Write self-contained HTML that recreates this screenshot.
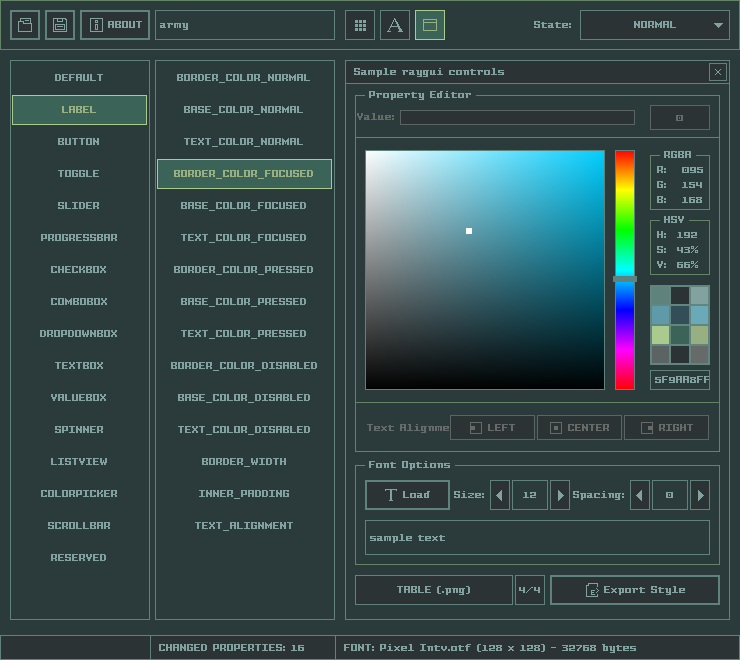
<!DOCTYPE html>
<html><head><meta charset="utf-8"><style>html,body{margin:0;padding:0;background:#2b3a3a;}svg{display:block;}</style></head>
<body><svg width="740" height="660" viewBox="0 0 740 660" shape-rendering="crispEdges"><defs><linearGradient id="gh" x1="0" y1="0" x2="1" y2="0"><stop offset="0" stop-color="#ffffff"/><stop offset="1" stop-color="#00ceff"/></linearGradient><linearGradient id="gv" x1="0" y1="0" x2="0" y2="1"><stop offset="0" stop-color="#000000" stop-opacity="0"/><stop offset="1" stop-color="#000000" stop-opacity="1"/></linearGradient><linearGradient id="hue" x1="0" y1="0" x2="0" y2="1"><stop offset="0.0000" stop-color="#ff0000"/><stop offset="0.1667" stop-color="#ffff00"/><stop offset="0.3333" stop-color="#00ff00"/><stop offset="0.5000" stop-color="#00ffff"/><stop offset="0.6667" stop-color="#0000ff"/><stop offset="0.8333" stop-color="#ff00ff"/><stop offset="1.0000" stop-color="#ff0000"/></linearGradient><path id="g37" d="M0 0h3v1h-3zM6 0h1v1h-1zM0 1h1v1h-1zM2 1h1v1h-1zM5 1h1v1h-1zM0 2h3v1h-3zM4 2h1v1h-1zM3 3h1v1h-1zM2 4h1v1h-1zM4 4h3v1h-3zM1 5h1v1h-1zM4 5h1v1h-1zM6 5h1v1h-1zM0 6h1v1h-1zM4 6h3v1h-3z"/><path id="g40" d="M1 0h3v1h-3zM0 1h2v1h-2zM0 2h2v1h-2zM0 3h2v1h-2zM0 4h2v1h-2zM0 5h2v1h-2zM0 6h2v1h-2zM1 7h3v1h-3z"/><path id="g41" d="M0 0h3v1h-3zM2 1h2v1h-2zM2 2h2v1h-2zM2 3h2v1h-2zM2 4h2v1h-2zM2 5h2v1h-2zM2 6h2v1h-2zM0 7h3v1h-3z"/><path id="g45" d="M0 3h5v1h-5z"/><path id="g46" d="M0 5h2v1h-2zM0 6h2v1h-2z"/><path id="g47" d="M5 1h2v1h-2zM4 2h1v1h-1zM3 3h1v1h-1zM2 4h1v1h-1zM1 5h1v1h-1zM0 6h1v1h-1z"/><path id="g48" d="M0 1h7v1h-7zM0 2h2v1h-2zM5 2h2v1h-2zM0 3h2v1h-2zM3 3h1v1h-1zM5 3h2v1h-2zM0 4h2v1h-2zM3 4h1v1h-1zM5 4h2v1h-2zM0 5h2v1h-2zM5 5h2v1h-2zM0 6h7v1h-7z"/><path id="g49" d="M1 1h3v1h-3zM2 2h2v1h-2zM2 3h2v1h-2zM2 4h2v1h-2zM2 5h2v1h-2zM0 6h6v1h-6z"/><path id="g50" d="M0 1h6v1h-6zM0 2h2v1h-2zM4 2h2v1h-2zM4 3h2v1h-2zM0 4h6v1h-6zM0 5h2v1h-2zM0 6h6v1h-6z"/><path id="g51" d="M0 1h6v1h-6zM4 2h2v1h-2zM1 3h4v1h-4zM4 4h2v1h-2zM4 5h2v1h-2zM0 6h6v1h-6z"/><path id="g52" d="M0 1h2v1h-2zM4 1h2v1h-2zM0 2h2v1h-2zM4 2h2v1h-2zM0 3h2v1h-2zM4 3h2v1h-2zM0 4h6v1h-6zM4 5h2v1h-2zM4 6h2v1h-2z"/><path id="g53" d="M0 1h6v1h-6zM0 2h2v1h-2zM0 3h6v1h-6zM4 4h2v1h-2zM0 5h2v1h-2zM4 5h2v1h-2zM0 6h6v1h-6z"/><path id="g54" d="M0 1h6v1h-6zM0 2h2v1h-2zM0 3h6v1h-6zM0 4h2v1h-2zM4 4h2v1h-2zM0 5h2v1h-2zM4 5h2v1h-2zM0 6h6v1h-6z"/><path id="g55" d="M0 1h6v1h-6zM4 2h2v1h-2zM3 3h2v1h-2zM2 4h2v1h-2zM1 5h2v1h-2zM1 6h2v1h-2z"/><path id="g56" d="M0 1h6v1h-6zM0 2h2v1h-2zM4 2h2v1h-2zM1 3h4v1h-4zM0 4h2v1h-2zM4 4h2v1h-2zM0 5h2v1h-2zM4 5h2v1h-2zM0 6h6v1h-6z"/><path id="g57" d="M0 1h6v1h-6zM0 2h2v1h-2zM4 2h2v1h-2zM0 3h2v1h-2zM4 3h2v1h-2zM0 4h6v1h-6zM4 5h2v1h-2zM0 6h6v1h-6z"/><path id="g58" d="M0 2h2v1h-2zM0 3h2v1h-2zM0 5h2v1h-2zM0 6h2v1h-2z"/><path id="g65" d="M0 0h6v1h-6zM0 1h2v1h-2zM4 1h2v1h-2zM0 2h2v1h-2zM4 2h2v1h-2zM0 3h6v1h-6zM0 4h2v1h-2zM4 4h2v1h-2zM0 5h2v1h-2zM4 5h2v1h-2zM0 6h2v1h-2zM4 6h2v1h-2z"/><path id="g66" d="M0 0h6v1h-6zM0 1h2v1h-2zM4 1h2v1h-2zM0 2h2v1h-2zM4 2h2v1h-2zM0 3h5v1h-5zM0 4h2v1h-2zM4 4h2v1h-2zM0 5h2v1h-2zM4 5h2v1h-2zM0 6h6v1h-6z"/><path id="g67" d="M0 0h6v1h-6zM0 1h2v1h-2zM4 1h2v1h-2zM0 2h2v1h-2zM0 3h2v1h-2zM0 4h2v1h-2zM0 5h2v1h-2zM4 5h2v1h-2zM0 6h6v1h-6z"/><path id="g68" d="M0 0h5v1h-5zM0 1h2v1h-2zM4 1h2v1h-2zM0 2h2v1h-2zM4 2h2v1h-2zM0 3h2v1h-2zM4 3h2v1h-2zM0 4h2v1h-2zM4 4h2v1h-2zM0 5h2v1h-2zM4 5h2v1h-2zM0 6h5v1h-5z"/><path id="g69" d="M0 0h6v1h-6zM0 1h2v1h-2zM0 2h2v1h-2zM0 3h5v1h-5zM0 4h2v1h-2zM0 5h2v1h-2zM0 6h6v1h-6z"/><path id="g70" d="M0 0h6v1h-6zM0 1h2v1h-2zM0 2h2v1h-2zM0 3h5v1h-5zM0 4h2v1h-2zM0 5h2v1h-2zM0 6h2v1h-2z"/><path id="g71" d="M0 0h6v1h-6zM0 1h2v1h-2zM4 1h2v1h-2zM0 2h2v1h-2zM0 3h2v1h-2zM3 3h3v1h-3zM0 4h2v1h-2zM4 4h2v1h-2zM0 5h2v1h-2zM4 5h2v1h-2zM0 6h6v1h-6z"/><path id="g72" d="M0 0h2v1h-2zM4 0h2v1h-2zM0 1h2v1h-2zM4 1h2v1h-2zM0 2h2v1h-2zM4 2h2v1h-2zM0 3h6v1h-6zM0 4h2v1h-2zM4 4h2v1h-2zM0 5h2v1h-2zM4 5h2v1h-2zM0 6h2v1h-2zM4 6h2v1h-2z"/><path id="g73" d="M0 0h6v1h-6zM2 1h2v1h-2zM2 2h2v1h-2zM2 3h2v1h-2zM2 4h2v1h-2zM2 5h2v1h-2zM0 6h6v1h-6z"/><path id="g75" d="M0 0h2v1h-2zM4 0h2v1h-2zM0 1h2v1h-2zM4 1h2v1h-2zM0 2h2v1h-2zM3 2h2v1h-2zM0 3h4v1h-4zM0 4h2v1h-2zM4 4h2v1h-2zM0 5h2v1h-2zM4 5h2v1h-2zM0 6h2v1h-2zM4 6h2v1h-2z"/><path id="g76" d="M0 0h2v1h-2zM0 1h2v1h-2zM0 2h2v1h-2zM0 3h2v1h-2zM0 4h2v1h-2zM0 5h2v1h-2zM0 6h6v1h-6z"/><path id="g77" d="M0 0h1v1h-1zM6 0h1v1h-1zM0 1h2v1h-2zM5 1h2v1h-2zM0 2h3v1h-3zM4 2h3v1h-3zM0 3h7v1h-7zM0 4h2v1h-2zM3 4h1v1h-1zM5 4h2v1h-2zM0 5h2v1h-2zM3 5h1v1h-1zM5 5h2v1h-2zM0 6h2v1h-2zM5 6h2v1h-2z"/><path id="g78" d="M0 0h2v1h-2zM4 0h2v1h-2zM0 1h2v1h-2zM4 1h2v1h-2zM0 2h3v1h-3zM4 2h2v1h-2zM0 3h6v1h-6zM0 4h2v1h-2zM3 4h3v1h-3zM0 5h2v1h-2zM4 5h2v1h-2zM0 6h2v1h-2zM4 6h2v1h-2z"/><path id="g79" d="M0 0h6v1h-6zM0 1h2v1h-2zM4 1h2v1h-2zM0 2h2v1h-2zM4 2h2v1h-2zM0 3h2v1h-2zM4 3h2v1h-2zM0 4h2v1h-2zM4 4h2v1h-2zM0 5h2v1h-2zM4 5h2v1h-2zM0 6h6v1h-6z"/><path id="g80" d="M0 0h6v1h-6zM0 1h2v1h-2zM4 1h2v1h-2zM0 2h2v1h-2zM4 2h2v1h-2zM0 3h2v1h-2zM4 3h2v1h-2zM0 4h6v1h-6zM0 5h2v1h-2zM0 6h2v1h-2z"/><path id="g82" d="M0 0h6v1h-6zM0 1h2v1h-2zM4 1h2v1h-2zM0 2h2v1h-2zM4 2h2v1h-2zM0 3h2v1h-2zM4 3h2v1h-2zM0 4h5v1h-5zM0 5h2v1h-2zM4 5h2v1h-2zM0 6h2v1h-2zM4 6h2v1h-2z"/><path id="g83" d="M0 0h6v1h-6zM0 1h2v1h-2zM4 1h2v1h-2zM0 2h2v1h-2zM0 3h6v1h-6zM4 4h2v1h-2zM0 5h2v1h-2zM4 5h2v1h-2zM0 6h6v1h-6z"/><path id="g84" d="M0 0h6v1h-6zM2 1h2v1h-2zM2 2h2v1h-2zM2 3h2v1h-2zM2 4h2v1h-2zM2 5h2v1h-2zM2 6h2v1h-2z"/><path id="g85" d="M0 0h2v1h-2zM4 0h2v1h-2zM0 1h2v1h-2zM4 1h2v1h-2zM0 2h2v1h-2zM4 2h2v1h-2zM0 3h2v1h-2zM4 3h2v1h-2zM0 4h2v1h-2zM4 4h2v1h-2zM0 5h2v1h-2zM4 5h2v1h-2zM0 6h6v1h-6z"/><path id="g86" d="M0 0h2v1h-2zM4 0h2v1h-2zM0 1h2v1h-2zM4 1h2v1h-2zM0 2h2v1h-2zM4 2h2v1h-2zM1 3h4v1h-4zM1 4h4v1h-4zM2 5h2v1h-2zM2 6h2v1h-2z"/><path id="g87" d="M0 0h2v1h-2zM5 0h2v1h-2zM0 1h2v1h-2zM5 1h2v1h-2zM0 2h2v1h-2zM3 2h1v1h-1zM5 2h2v1h-2zM0 3h2v1h-2zM3 3h1v1h-1zM5 3h2v1h-2zM0 4h7v1h-7zM1 5h2v1h-2zM4 5h2v1h-2zM1 6h2v1h-2zM4 6h2v1h-2z"/><path id="g88" d="M0 0h2v1h-2zM4 0h2v1h-2zM0 1h2v1h-2zM4 1h2v1h-2zM1 2h4v1h-4zM2 3h2v1h-2zM1 4h4v1h-4zM0 5h2v1h-2zM4 5h2v1h-2zM0 6h2v1h-2zM4 6h2v1h-2z"/><path id="g95" d="M0 8h6v1h-6z"/><path id="g97" d="M0 2h5v1h-5zM3 3h2v1h-2zM0 4h5v1h-5zM0 5h2v1h-2zM3 5h2v1h-2zM0 6h6v1h-6z"/><path id="g98" d="M0 0h3v1h-3zM1 1h2v1h-2zM1 2h5v1h-5zM1 3h2v1h-2zM4 3h2v1h-2zM1 4h2v1h-2zM4 4h2v1h-2zM1 5h2v1h-2zM4 5h2v1h-2zM1 6h5v1h-5z"/><path id="g99" d="M0 2h6v1h-6zM0 3h2v1h-2zM4 3h2v1h-2zM0 4h2v1h-2zM0 5h2v1h-2zM0 6h6v1h-6z"/><path id="g100" d="M3 0h3v1h-3zM3 1h2v1h-2zM0 2h5v1h-5zM0 3h2v1h-2zM3 3h2v1h-2zM0 4h2v1h-2zM3 4h2v1h-2zM0 5h2v1h-2zM3 5h2v1h-2zM0 6h5v1h-5z"/><path id="g101" d="M0 2h6v1h-6zM0 3h2v1h-2zM4 3h2v1h-2zM0 4h6v1h-6zM0 5h2v1h-2zM0 6h6v1h-6z"/><path id="g102" d="M2 0h4v1h-4zM1 1h2v1h-2zM0 2h5v1h-5zM1 3h2v1h-2zM1 4h2v1h-2zM1 5h2v1h-2zM1 6h2v1h-2z"/><path id="g103" d="M0 2h6v1h-6zM0 3h2v1h-2zM3 3h2v1h-2zM0 4h2v1h-2zM3 4h2v1h-2zM0 5h2v1h-2zM3 5h2v1h-2zM0 6h5v1h-5zM3 7h2v1h-2zM0 8h5v1h-5z"/><path id="g105" d="M2 0h2v1h-2zM1 2h3v1h-3zM2 3h2v1h-2zM2 4h2v1h-2zM2 5h2v1h-2zM0 6h6v1h-6z"/><path id="g108" d="M1 0h3v1h-3zM2 1h2v1h-2zM2 2h2v1h-2zM2 3h2v1h-2zM2 4h2v1h-2zM2 5h2v1h-2zM0 6h6v1h-6z"/><path id="g109" d="M0 2h7v1h-7zM0 3h2v1h-2zM3 3h1v1h-1zM5 3h2v1h-2zM0 4h2v1h-2zM3 4h1v1h-1zM5 4h2v1h-2zM0 5h2v1h-2zM3 5h1v1h-1zM5 5h2v1h-2zM0 6h2v1h-2zM3 6h1v1h-1zM5 6h2v1h-2z"/><path id="g110" d="M0 2h6v1h-6zM1 3h2v1h-2zM4 3h2v1h-2zM1 4h2v1h-2zM4 4h2v1h-2zM1 5h2v1h-2zM4 5h2v1h-2zM1 6h2v1h-2zM4 6h2v1h-2z"/><path id="g111" d="M0 2h6v1h-6zM0 3h2v1h-2zM4 3h2v1h-2zM0 4h2v1h-2zM4 4h2v1h-2zM0 5h2v1h-2zM4 5h2v1h-2zM0 6h6v1h-6z"/><path id="g112" d="M0 2h6v1h-6zM1 3h2v1h-2zM4 3h2v1h-2zM1 4h2v1h-2zM4 4h2v1h-2zM1 5h2v1h-2zM4 5h2v1h-2zM1 6h5v1h-5zM1 7h2v1h-2zM1 8h2v1h-2z"/><path id="g114" d="M0 2h6v1h-6zM1 3h2v1h-2zM4 3h2v1h-2zM1 4h2v1h-2zM1 5h2v1h-2zM1 6h2v1h-2z"/><path id="g115" d="M0 2h6v1h-6zM0 3h2v1h-2zM0 4h6v1h-6zM4 5h2v1h-2zM0 6h6v1h-6z"/><path id="g116" d="M1 1h2v1h-2zM0 2h6v1h-6zM1 3h2v1h-2zM1 4h2v1h-2zM1 5h2v1h-2zM1 6h5v1h-5z"/><path id="g117" d="M0 2h2v1h-2zM3 2h2v1h-2zM0 3h2v1h-2zM3 3h2v1h-2zM0 4h2v1h-2zM3 4h2v1h-2zM0 5h2v1h-2zM3 5h2v1h-2zM0 6h6v1h-6z"/><path id="g118" d="M0 2h2v1h-2zM4 2h2v1h-2zM0 3h2v1h-2zM4 3h2v1h-2zM0 4h2v1h-2zM4 4h2v1h-2zM1 5h4v1h-4zM2 6h2v1h-2z"/><path id="g120" d="M0 2h2v1h-2zM4 2h2v1h-2zM1 3h4v1h-4zM2 4h2v1h-2zM1 5h4v1h-4zM0 6h2v1h-2zM4 6h2v1h-2z"/><path id="g121" d="M0 2h3v1h-3zM4 2h2v1h-2zM1 3h2v1h-2zM4 3h2v1h-2zM1 4h2v1h-2zM4 4h2v1h-2zM1 5h2v1h-2zM4 5h2v1h-2zM1 6h5v1h-5zM4 7h2v1h-2zM1 8h5v1h-5z"/><path id="g122" d="M0 2h6v1h-6zM4 3h2v1h-2zM2 4h2v1h-2zM0 5h2v1h-2zM0 6h6v1h-6z"/></defs><rect x="0" y="0" width="740" height="660" fill="#2b3a3a"/><rect x="0" y="0" width="740" height="1" fill="#638465"/><rect x="0" y="49" width="740" height="1" fill="#638465"/><rect x="0" y="0" width="1" height="50" fill="#638465"/><rect x="739" y="0" width="1" height="50" fill="#638465"/><rect x="10" y="10" width="30" height="30" fill="#60827d"/><rect x="12" y="12" width="26" height="26" fill="#2c3334"/><rect x="45" y="10" width="30" height="30" fill="#60827d"/><rect x="47" y="12" width="26" height="26" fill="#2c3334"/><rect x="80" y="10" width="70" height="30" fill="#60827d"/><rect x="82" y="12" width="66" height="26" fill="#2c3334"/><path fill="#82a29f" d="M20 18h11v1h-11zM20 19h1v1h-1zM30 19h1v1h-1zM20 20h1v1h-1zM25 20h4v1h-4zM30 20h1v1h-1zM18 21h6v1h-6zM30 21h1v1h-1zM18 22h1v1h-1zM23 22h1v1h-1zM30 22h1v1h-1zM18 23h1v1h-1zM23 23h9v1h-9zM18 24h1v1h-1zM31 24h1v1h-1zM18 25h1v1h-1zM31 25h1v1h-1zM18 26h1v1h-1zM31 26h1v1h-1zM18 27h1v1h-1zM31 27h1v1h-1zM18 28h1v1h-1zM31 28h1v1h-1zM18 29h1v1h-1zM31 29h1v1h-1zM18 30h1v1h-1zM31 30h1v1h-1zM18 31h14v1h-14z"/><path fill="#82a29f" d="M53 18h13v1h-13zM53 19h1v1h-1zM57 19h1v1h-1zM62 19h1v1h-1zM65 19h2v1h-2zM53 20h1v1h-1zM57 20h1v1h-1zM62 20h1v1h-1zM66 20h1v1h-1zM53 21h1v1h-1zM57 21h6v1h-6zM66 21h1v1h-1zM53 22h1v1h-1zM66 22h1v1h-1zM53 23h1v1h-1zM66 23h1v1h-1zM53 24h1v1h-1zM55 24h10v1h-10zM66 24h1v1h-1zM53 25h1v1h-1zM55 25h1v1h-1zM64 25h1v1h-1zM66 25h1v1h-1zM53 26h1v1h-1zM55 26h1v1h-1zM57 26h6v1h-6zM64 26h1v1h-1zM66 26h1v1h-1zM53 27h1v1h-1zM55 27h1v1h-1zM64 27h1v1h-1zM66 27h1v1h-1zM53 28h1v1h-1zM55 28h1v1h-1zM64 28h1v1h-1zM66 28h1v1h-1zM53 29h1v1h-1zM55 29h10v1h-10zM66 29h1v1h-1zM53 30h1v1h-1zM66 30h1v1h-1zM53 31h14v1h-14z"/><path fill="#82a29f" d="M90 18h13v1h-13zM90 19h1v1h-1zM102 19h1v1h-1zM90 20h1v1h-1zM95 20h3v1h-3zM102 20h1v1h-1zM90 21h1v1h-1zM95 21h1v1h-1zM97 21h1v1h-1zM102 21h1v1h-1zM90 22h1v1h-1zM95 22h3v1h-3zM102 22h1v1h-1zM90 23h1v1h-1zM102 23h1v1h-1zM90 24h1v1h-1zM95 24h3v1h-3zM102 24h1v1h-1zM90 25h1v1h-1zM95 25h1v1h-1zM97 25h1v1h-1zM102 25h1v1h-1zM90 26h1v1h-1zM95 26h1v1h-1zM97 26h1v1h-1zM102 26h1v1h-1zM90 27h1v1h-1zM95 27h1v1h-1zM97 27h1v1h-1zM102 27h1v1h-1zM90 28h1v1h-1zM95 28h1v1h-1zM97 28h1v1h-1zM102 28h1v1h-1zM90 29h1v1h-1zM95 29h3v1h-3zM102 29h1v1h-1zM90 30h1v1h-1zM102 30h1v1h-1zM90 31h13v1h-13z"/><g fill="#82a29f"><use href="#g65" x="108" y="21"/><use href="#g66" x="115" y="21"/><use href="#g79" x="122" y="21"/><use href="#g85" x="129" y="21"/><use href="#g84" x="136" y="21"/></g><rect x="155" y="10" width="180" height="30" fill="#60827d"/><rect x="156" y="11" width="178" height="28" fill="#2b3a3a"/><g fill="#82a29f"><use href="#g97" x="160" y="21"/><use href="#g114" x="167" y="21"/><use href="#g109" x="174" y="21"/><use href="#g121" x="182" y="21"/></g><rect x="345" y="10" width="30" height="30" fill="#60827d"/><rect x="346" y="11" width="28" height="28" fill="#2c3334"/><rect x="355" y="20" width="3" height="3" fill="#82a29f"/><rect x="355" y="24" width="3" height="3" fill="#82a29f"/><rect x="355" y="28" width="3" height="3" fill="#82a29f"/><rect x="359" y="20" width="3" height="3" fill="#82a29f"/><rect x="359" y="24" width="3" height="3" fill="#82a29f"/><rect x="359" y="28" width="3" height="3" fill="#82a29f"/><rect x="363" y="20" width="3" height="3" fill="#82a29f"/><rect x="363" y="24" width="3" height="3" fill="#82a29f"/><rect x="363" y="28" width="3" height="3" fill="#82a29f"/><rect x="380" y="10" width="30" height="30" fill="#60827d"/><rect x="381" y="11" width="28" height="28" fill="#2c3334"/><path fill="#82a29f" d="M394 18h1v1h-1zM394 19h1v1h-1zM395 19h1v1h-1zM393 20h1v1h-1zM395 20h1v1h-1zM393 21h1v1h-1zM395 21h1v1h-1zM396 21h1v1h-1zM392 22h1v1h-1zM396 22h1v1h-1zM397 22h1v1h-1zM392 23h1v1h-1zM396 23h1v1h-1zM397 23h1v1h-1zM391 24h1v1h-1zM397 24h1v1h-1zM398 24h1v1h-1zM391 25h1v1h-1zM397 25h1v1h-1zM398 25h1v1h-1zM390 26h1v1h-1zM391 26h1v1h-1zM392 26h1v1h-1zM393 26h1v1h-1zM394 26h1v1h-1zM395 26h1v1h-1zM396 26h1v1h-1zM397 26h1v1h-1zM398 26h1v1h-1zM399 26h1v1h-1zM390 27h1v1h-1zM398 27h1v1h-1zM399 27h1v1h-1zM389 28h1v1h-1zM398 28h1v1h-1zM399 28h1v1h-1zM400 28h1v1h-1zM389 29h1v1h-1zM399 29h1v1h-1zM400 29h1v1h-1zM401 29h1v1h-1zM388 30h1v1h-1zM399 30h1v1h-1zM400 30h1v1h-1zM401 30h1v1h-1zM387 31h1v1h-1zM388 31h1v1h-1zM389 31h1v1h-1zM390 31h1v1h-1zM398 31h1v1h-1zM399 31h1v1h-1zM400 31h1v1h-1zM401 31h1v1h-1zM402 31h1v1h-1z"/><rect x="415" y="10" width="30" height="30" fill="#a9cb8d"/><rect x="416" y="11" width="28" height="28" fill="#3b6357"/><rect x="423" y="19" width="14" height="1" fill="#97af81"/><rect x="423" y="30" width="14" height="1" fill="#97af81"/><rect x="423" y="19" width="1" height="12" fill="#97af81"/><rect x="436" y="19" width="1" height="12" fill="#97af81"/><rect x="423" y="22" width="14" height="1" fill="#97af81"/><g fill="#82a29f"><use href="#g83" x="534" y="21"/><use href="#g116" x="541" y="21"/><use href="#g97" x="548" y="21"/><use href="#g116" x="555" y="21"/><use href="#g101" x="562" y="21"/><use href="#g58" x="569" y="21"/></g><rect x="580" y="10" width="150" height="30" fill="#60827d"/><rect x="581" y="11" width="148" height="28" fill="#2c3334"/><g fill="#82a29f"><use href="#g78" x="634" y="21"/><use href="#g79" x="641" y="21"/><use href="#g82" x="648" y="21"/><use href="#g77" x="655" y="21"/><use href="#g65" x="663" y="21"/><use href="#g76" x="670" y="21"/></g><rect x="714" y="23" width="9" height="1" fill="#82a29f"/><rect x="715" y="24" width="7" height="1" fill="#82a29f"/><rect x="716" y="25" width="5" height="1" fill="#82a29f"/><rect x="717" y="26" width="3" height="1" fill="#82a29f"/><rect x="718" y="27" width="1" height="1" fill="#82a29f"/><rect x="10" y="60" width="140" height="560" fill="#60827d"/><rect x="11" y="61" width="138" height="558" fill="#2b3a3a"/><g fill="#82a29f"><use href="#g68" x="55" y="74"/><use href="#g69" x="62" y="74"/><use href="#g70" x="69" y="74"/><use href="#g65" x="76" y="74"/><use href="#g85" x="83" y="74"/><use href="#g76" x="90" y="74"/><use href="#g84" x="97" y="74"/></g><rect x="12" y="95" width="135" height="30" fill="#a9cb8d"/><rect x="13" y="96" width="133" height="28" fill="#3b6357"/><g fill="#97af81"><use href="#g76" x="62" y="106"/><use href="#g65" x="69" y="106"/><use href="#g66" x="76" y="106"/><use href="#g69" x="83" y="106"/><use href="#g76" x="90" y="106"/></g><g fill="#82a29f"><use href="#g66" x="58" y="138"/><use href="#g85" x="65" y="138"/><use href="#g84" x="72" y="138"/><use href="#g84" x="79" y="138"/><use href="#g79" x="86" y="138"/><use href="#g78" x="93" y="138"/></g><g fill="#82a29f"><use href="#g84" x="58" y="170"/><use href="#g79" x="65" y="170"/><use href="#g71" x="72" y="170"/><use href="#g71" x="79" y="170"/><use href="#g76" x="86" y="170"/><use href="#g69" x="93" y="170"/></g><g fill="#82a29f"><use href="#g83" x="58" y="202"/><use href="#g76" x="65" y="202"/><use href="#g73" x="72" y="202"/><use href="#g68" x="79" y="202"/><use href="#g69" x="86" y="202"/><use href="#g82" x="93" y="202"/></g><g fill="#82a29f"><use href="#g80" x="41" y="234"/><use href="#g82" x="48" y="234"/><use href="#g79" x="55" y="234"/><use href="#g71" x="62" y="234"/><use href="#g82" x="69" y="234"/><use href="#g69" x="76" y="234"/><use href="#g83" x="83" y="234"/><use href="#g83" x="90" y="234"/><use href="#g66" x="97" y="234"/><use href="#g65" x="104" y="234"/><use href="#g82" x="111" y="234"/></g><g fill="#82a29f"><use href="#g67" x="51" y="266"/><use href="#g72" x="58" y="266"/><use href="#g69" x="65" y="266"/><use href="#g67" x="72" y="266"/><use href="#g75" x="79" y="266"/><use href="#g66" x="86" y="266"/><use href="#g79" x="93" y="266"/><use href="#g88" x="100" y="266"/></g><g fill="#82a29f"><use href="#g67" x="51" y="298"/><use href="#g79" x="58" y="298"/><use href="#g77" x="65" y="298"/><use href="#g66" x="73" y="298"/><use href="#g79" x="80" y="298"/><use href="#g66" x="87" y="298"/><use href="#g79" x="94" y="298"/><use href="#g88" x="101" y="298"/></g><g fill="#82a29f"><use href="#g68" x="40" y="330"/><use href="#g82" x="47" y="330"/><use href="#g79" x="54" y="330"/><use href="#g80" x="61" y="330"/><use href="#g68" x="68" y="330"/><use href="#g79" x="75" y="330"/><use href="#g87" x="82" y="330"/><use href="#g78" x="90" y="330"/><use href="#g66" x="97" y="330"/><use href="#g79" x="104" y="330"/><use href="#g88" x="111" y="330"/></g><g fill="#82a29f"><use href="#g84" x="55" y="362"/><use href="#g69" x="62" y="362"/><use href="#g88" x="69" y="362"/><use href="#g84" x="76" y="362"/><use href="#g66" x="83" y="362"/><use href="#g79" x="90" y="362"/><use href="#g88" x="97" y="362"/></g><g fill="#82a29f"><use href="#g86" x="51" y="394"/><use href="#g65" x="58" y="394"/><use href="#g76" x="65" y="394"/><use href="#g85" x="72" y="394"/><use href="#g69" x="79" y="394"/><use href="#g66" x="86" y="394"/><use href="#g79" x="93" y="394"/><use href="#g88" x="100" y="394"/></g><g fill="#82a29f"><use href="#g83" x="55" y="426"/><use href="#g80" x="62" y="426"/><use href="#g73" x="69" y="426"/><use href="#g78" x="76" y="426"/><use href="#g78" x="83" y="426"/><use href="#g69" x="90" y="426"/><use href="#g82" x="97" y="426"/></g><g fill="#82a29f"><use href="#g76" x="51" y="458"/><use href="#g73" x="58" y="458"/><use href="#g83" x="65" y="458"/><use href="#g84" x="72" y="458"/><use href="#g86" x="79" y="458"/><use href="#g73" x="86" y="458"/><use href="#g69" x="93" y="458"/><use href="#g87" x="100" y="458"/></g><g fill="#82a29f"><use href="#g67" x="41" y="490"/><use href="#g79" x="48" y="490"/><use href="#g76" x="55" y="490"/><use href="#g79" x="62" y="490"/><use href="#g82" x="69" y="490"/><use href="#g80" x="76" y="490"/><use href="#g73" x="83" y="490"/><use href="#g67" x="90" y="490"/><use href="#g75" x="97" y="490"/><use href="#g69" x="104" y="490"/><use href="#g82" x="111" y="490"/></g><g fill="#82a29f"><use href="#g83" x="48" y="522"/><use href="#g67" x="55" y="522"/><use href="#g82" x="62" y="522"/><use href="#g79" x="69" y="522"/><use href="#g76" x="76" y="522"/><use href="#g76" x="83" y="522"/><use href="#g66" x="90" y="522"/><use href="#g65" x="97" y="522"/><use href="#g82" x="104" y="522"/></g><g fill="#82a29f"><use href="#g82" x="51" y="554"/><use href="#g69" x="58" y="554"/><use href="#g83" x="65" y="554"/><use href="#g69" x="72" y="554"/><use href="#g82" x="79" y="554"/><use href="#g86" x="86" y="554"/><use href="#g69" x="93" y="554"/><use href="#g68" x="100" y="554"/></g><rect x="155" y="60" width="180" height="560" fill="#60827d"/><rect x="156" y="61" width="178" height="558" fill="#2b3a3a"/><g fill="#82a29f"><use href="#g66" x="177" y="74"/><use href="#g79" x="184" y="74"/><use href="#g82" x="191" y="74"/><use href="#g68" x="198" y="74"/><use href="#g69" x="205" y="74"/><use href="#g82" x="212" y="74"/><use href="#g95" x="219" y="74"/><use href="#g67" x="226" y="74"/><use href="#g79" x="233" y="74"/><use href="#g76" x="240" y="74"/><use href="#g79" x="247" y="74"/><use href="#g82" x="254" y="74"/><use href="#g95" x="261" y="74"/><use href="#g78" x="268" y="74"/><use href="#g79" x="275" y="74"/><use href="#g82" x="282" y="74"/><use href="#g77" x="289" y="74"/><use href="#g65" x="297" y="74"/><use href="#g76" x="304" y="74"/></g><g fill="#82a29f"><use href="#g66" x="184" y="106"/><use href="#g65" x="191" y="106"/><use href="#g83" x="198" y="106"/><use href="#g69" x="205" y="106"/><use href="#g95" x="212" y="106"/><use href="#g67" x="219" y="106"/><use href="#g79" x="226" y="106"/><use href="#g76" x="233" y="106"/><use href="#g79" x="240" y="106"/><use href="#g82" x="247" y="106"/><use href="#g95" x="254" y="106"/><use href="#g78" x="261" y="106"/><use href="#g79" x="268" y="106"/><use href="#g82" x="275" y="106"/><use href="#g77" x="282" y="106"/><use href="#g65" x="290" y="106"/><use href="#g76" x="297" y="106"/></g><g fill="#82a29f"><use href="#g84" x="184" y="138"/><use href="#g69" x="191" y="138"/><use href="#g88" x="198" y="138"/><use href="#g84" x="205" y="138"/><use href="#g95" x="212" y="138"/><use href="#g67" x="219" y="138"/><use href="#g79" x="226" y="138"/><use href="#g76" x="233" y="138"/><use href="#g79" x="240" y="138"/><use href="#g82" x="247" y="138"/><use href="#g95" x="254" y="138"/><use href="#g78" x="261" y="138"/><use href="#g79" x="268" y="138"/><use href="#g82" x="275" y="138"/><use href="#g77" x="282" y="138"/><use href="#g65" x="290" y="138"/><use href="#g76" x="297" y="138"/></g><rect x="157" y="159" width="175" height="30" fill="#a9cb8d"/><rect x="158" y="160" width="173" height="28" fill="#3b6357"/><g fill="#97af81"><use href="#g66" x="174" y="170"/><use href="#g79" x="181" y="170"/><use href="#g82" x="188" y="170"/><use href="#g68" x="195" y="170"/><use href="#g69" x="202" y="170"/><use href="#g82" x="209" y="170"/><use href="#g95" x="216" y="170"/><use href="#g67" x="223" y="170"/><use href="#g79" x="230" y="170"/><use href="#g76" x="237" y="170"/><use href="#g79" x="244" y="170"/><use href="#g82" x="251" y="170"/><use href="#g95" x="258" y="170"/><use href="#g70" x="265" y="170"/><use href="#g79" x="272" y="170"/><use href="#g67" x="279" y="170"/><use href="#g85" x="286" y="170"/><use href="#g83" x="293" y="170"/><use href="#g69" x="300" y="170"/><use href="#g68" x="307" y="170"/></g><g fill="#82a29f"><use href="#g66" x="181" y="202"/><use href="#g65" x="188" y="202"/><use href="#g83" x="195" y="202"/><use href="#g69" x="202" y="202"/><use href="#g95" x="209" y="202"/><use href="#g67" x="216" y="202"/><use href="#g79" x="223" y="202"/><use href="#g76" x="230" y="202"/><use href="#g79" x="237" y="202"/><use href="#g82" x="244" y="202"/><use href="#g95" x="251" y="202"/><use href="#g70" x="258" y="202"/><use href="#g79" x="265" y="202"/><use href="#g67" x="272" y="202"/><use href="#g85" x="279" y="202"/><use href="#g83" x="286" y="202"/><use href="#g69" x="293" y="202"/><use href="#g68" x="300" y="202"/></g><g fill="#82a29f"><use href="#g84" x="181" y="234"/><use href="#g69" x="188" y="234"/><use href="#g88" x="195" y="234"/><use href="#g84" x="202" y="234"/><use href="#g95" x="209" y="234"/><use href="#g67" x="216" y="234"/><use href="#g79" x="223" y="234"/><use href="#g76" x="230" y="234"/><use href="#g79" x="237" y="234"/><use href="#g82" x="244" y="234"/><use href="#g95" x="251" y="234"/><use href="#g70" x="258" y="234"/><use href="#g79" x="265" y="234"/><use href="#g67" x="272" y="234"/><use href="#g85" x="279" y="234"/><use href="#g83" x="286" y="234"/><use href="#g69" x="293" y="234"/><use href="#g68" x="300" y="234"/></g><g fill="#82a29f"><use href="#g66" x="174" y="266"/><use href="#g79" x="181" y="266"/><use href="#g82" x="188" y="266"/><use href="#g68" x="195" y="266"/><use href="#g69" x="202" y="266"/><use href="#g82" x="209" y="266"/><use href="#g95" x="216" y="266"/><use href="#g67" x="223" y="266"/><use href="#g79" x="230" y="266"/><use href="#g76" x="237" y="266"/><use href="#g79" x="244" y="266"/><use href="#g82" x="251" y="266"/><use href="#g95" x="258" y="266"/><use href="#g80" x="265" y="266"/><use href="#g82" x="272" y="266"/><use href="#g69" x="279" y="266"/><use href="#g83" x="286" y="266"/><use href="#g83" x="293" y="266"/><use href="#g69" x="300" y="266"/><use href="#g68" x="307" y="266"/></g><g fill="#82a29f"><use href="#g66" x="181" y="298"/><use href="#g65" x="188" y="298"/><use href="#g83" x="195" y="298"/><use href="#g69" x="202" y="298"/><use href="#g95" x="209" y="298"/><use href="#g67" x="216" y="298"/><use href="#g79" x="223" y="298"/><use href="#g76" x="230" y="298"/><use href="#g79" x="237" y="298"/><use href="#g82" x="244" y="298"/><use href="#g95" x="251" y="298"/><use href="#g80" x="258" y="298"/><use href="#g82" x="265" y="298"/><use href="#g69" x="272" y="298"/><use href="#g83" x="279" y="298"/><use href="#g83" x="286" y="298"/><use href="#g69" x="293" y="298"/><use href="#g68" x="300" y="298"/></g><g fill="#82a29f"><use href="#g84" x="181" y="330"/><use href="#g69" x="188" y="330"/><use href="#g88" x="195" y="330"/><use href="#g84" x="202" y="330"/><use href="#g95" x="209" y="330"/><use href="#g67" x="216" y="330"/><use href="#g79" x="223" y="330"/><use href="#g76" x="230" y="330"/><use href="#g79" x="237" y="330"/><use href="#g82" x="244" y="330"/><use href="#g95" x="251" y="330"/><use href="#g80" x="258" y="330"/><use href="#g82" x="265" y="330"/><use href="#g69" x="272" y="330"/><use href="#g83" x="279" y="330"/><use href="#g83" x="286" y="330"/><use href="#g69" x="293" y="330"/><use href="#g68" x="300" y="330"/></g><g fill="#82a29f"><use href="#g66" x="171" y="362"/><use href="#g79" x="178" y="362"/><use href="#g82" x="185" y="362"/><use href="#g68" x="192" y="362"/><use href="#g69" x="199" y="362"/><use href="#g82" x="206" y="362"/><use href="#g95" x="213" y="362"/><use href="#g67" x="220" y="362"/><use href="#g79" x="227" y="362"/><use href="#g76" x="234" y="362"/><use href="#g79" x="241" y="362"/><use href="#g82" x="248" y="362"/><use href="#g95" x="255" y="362"/><use href="#g68" x="262" y="362"/><use href="#g73" x="269" y="362"/><use href="#g83" x="276" y="362"/><use href="#g65" x="283" y="362"/><use href="#g66" x="290" y="362"/><use href="#g76" x="297" y="362"/><use href="#g69" x="304" y="362"/><use href="#g68" x="311" y="362"/></g><g fill="#82a29f"><use href="#g66" x="178" y="394"/><use href="#g65" x="185" y="394"/><use href="#g83" x="192" y="394"/><use href="#g69" x="199" y="394"/><use href="#g95" x="206" y="394"/><use href="#g67" x="213" y="394"/><use href="#g79" x="220" y="394"/><use href="#g76" x="227" y="394"/><use href="#g79" x="234" y="394"/><use href="#g82" x="241" y="394"/><use href="#g95" x="248" y="394"/><use href="#g68" x="255" y="394"/><use href="#g73" x="262" y="394"/><use href="#g83" x="269" y="394"/><use href="#g65" x="276" y="394"/><use href="#g66" x="283" y="394"/><use href="#g76" x="290" y="394"/><use href="#g69" x="297" y="394"/><use href="#g68" x="304" y="394"/></g><g fill="#82a29f"><use href="#g84" x="178" y="426"/><use href="#g69" x="185" y="426"/><use href="#g88" x="192" y="426"/><use href="#g84" x="199" y="426"/><use href="#g95" x="206" y="426"/><use href="#g67" x="213" y="426"/><use href="#g79" x="220" y="426"/><use href="#g76" x="227" y="426"/><use href="#g79" x="234" y="426"/><use href="#g82" x="241" y="426"/><use href="#g95" x="248" y="426"/><use href="#g68" x="255" y="426"/><use href="#g73" x="262" y="426"/><use href="#g83" x="269" y="426"/><use href="#g65" x="276" y="426"/><use href="#g66" x="283" y="426"/><use href="#g76" x="290" y="426"/><use href="#g69" x="297" y="426"/><use href="#g68" x="304" y="426"/></g><g fill="#82a29f"><use href="#g66" x="202" y="458"/><use href="#g79" x="209" y="458"/><use href="#g82" x="216" y="458"/><use href="#g68" x="223" y="458"/><use href="#g69" x="230" y="458"/><use href="#g82" x="237" y="458"/><use href="#g95" x="244" y="458"/><use href="#g87" x="251" y="458"/><use href="#g73" x="259" y="458"/><use href="#g68" x="266" y="458"/><use href="#g84" x="273" y="458"/><use href="#g72" x="280" y="458"/></g><g fill="#82a29f"><use href="#g73" x="199" y="490"/><use href="#g78" x="206" y="490"/><use href="#g78" x="213" y="490"/><use href="#g69" x="220" y="490"/><use href="#g82" x="227" y="490"/><use href="#g95" x="234" y="490"/><use href="#g80" x="241" y="490"/><use href="#g65" x="248" y="490"/><use href="#g68" x="255" y="490"/><use href="#g68" x="262" y="490"/><use href="#g73" x="269" y="490"/><use href="#g78" x="276" y="490"/><use href="#g71" x="283" y="490"/></g><g fill="#82a29f"><use href="#g84" x="195" y="522"/><use href="#g69" x="202" y="522"/><use href="#g88" x="209" y="522"/><use href="#g84" x="216" y="522"/><use href="#g95" x="223" y="522"/><use href="#g65" x="230" y="522"/><use href="#g76" x="237" y="522"/><use href="#g73" x="244" y="522"/><use href="#g71" x="251" y="522"/><use href="#g78" x="258" y="522"/><use href="#g77" x="265" y="522"/><use href="#g69" x="273" y="522"/><use href="#g78" x="280" y="522"/><use href="#g84" x="287" y="522"/></g><rect x="345" y="60" width="385" height="560" fill="#60827d"/><rect x="346" y="61" width="383" height="558" fill="#2b3a3a"/><rect x="345" y="60" width="385" height="24" fill="#60827d"/><rect x="346" y="61" width="383" height="22" fill="#2c3334"/><g fill="#82a29f"><use href="#g83" x="354" y="68"/><use href="#g97" x="361" y="68"/><use href="#g109" x="368" y="68"/><use href="#g112" x="376" y="68"/><use href="#g108" x="383" y="68"/><use href="#g101" x="390" y="68"/><use href="#g114" x="402" y="68"/><use href="#g97" x="409" y="68"/><use href="#g121" x="416" y="68"/><use href="#g103" x="423" y="68"/><use href="#g117" x="430" y="68"/><use href="#g105" x="437" y="68"/><use href="#g99" x="449" y="68"/><use href="#g111" x="456" y="68"/><use href="#g110" x="463" y="68"/><use href="#g116" x="470" y="68"/><use href="#g114" x="477" y="68"/><use href="#g111" x="484" y="68"/><use href="#g108" x="491" y="68"/><use href="#g115" x="498" y="68"/></g><rect x="709" y="63" width="18" height="18" fill="#60827d"/><rect x="710" y="64" width="16" height="16" fill="#2c3334"/><path fill="#82a29f" d="M715 69h1v1h-1zM716 70h1v1h-1zM717 71h1v1h-1zM718 72h1v1h-1zM719 73h1v1h-1zM720 74h1v1h-1zM720 69h1v1h-1zM719 70h1v1h-1zM718 71h1v1h-1zM717 72h1v1h-1zM716 73h1v1h-1zM715 74h1v1h-1z"/><rect x="355" y="95" width="1" height="357" fill="#638465"/><rect x="719" y="95" width="1" height="357" fill="#638465"/><rect x="355" y="451" width="365" height="1" fill="#638465"/><rect x="355" y="95" width="10" height="1" fill="#638465"/><rect x="476" y="95" width="244" height="1" fill="#638465"/><g fill="#82a29f"><use href="#g80" x="369" y="91"/><use href="#g114" x="376" y="91"/><use href="#g111" x="383" y="91"/><use href="#g112" x="390" y="91"/><use href="#g101" x="397" y="91"/><use href="#g114" x="404" y="91"/><use href="#g116" x="411" y="91"/><use href="#g121" x="418" y="91"/><use href="#g69" x="430" y="91"/><use href="#g100" x="437" y="91"/><use href="#g105" x="444" y="91"/><use href="#g116" x="451" y="91"/><use href="#g111" x="458" y="91"/><use href="#g114" x="465" y="91"/></g><g fill="#666b69"><use href="#g86" x="357" y="113"/><use href="#g97" x="364" y="113"/><use href="#g108" x="371" y="113"/><use href="#g117" x="378" y="113"/><use href="#g101" x="385" y="113"/><use href="#g58" x="392" y="113"/></g><rect x="400" y="110" width="235" height="15" fill="#5b6462"/><rect x="401" y="111" width="233" height="13" fill="#2c3334"/><rect x="650" y="105" width="60" height="25" fill="#5b6462"/><rect x="651" y="106" width="58" height="23" fill="#2c3334"/><g fill="#666b69"><use href="#g48" x="676" y="114"/></g><rect x="355" y="137" width="365" height="1" fill="#638465"/><rect x="365" y="150" width="240" height="240" fill="url(#gh)"/><rect x="365" y="150" width="240" height="240" fill="url(#gv)"/><rect x="365" y="150" width="240" height="1" fill="#60827d"/><rect x="365" y="389" width="240" height="1" fill="#60827d"/><rect x="365" y="150" width="1" height="240" fill="#60827d"/><rect x="604" y="150" width="1" height="240" fill="#60827d"/><rect x="466" y="228" width="6" height="6" fill="#ffffff"/><rect x="615" y="150" width="20" height="240" fill="url(#hue)"/><rect x="615" y="150" width="20" height="1" fill="#60827d"/><rect x="615" y="389" width="20" height="1" fill="#60827d"/><rect x="615" y="150" width="1" height="240" fill="#60827d"/><rect x="634" y="150" width="1" height="240" fill="#60827d"/><rect x="613" y="276" width="24" height="6" fill="#60827d"/><rect x="650" y="155" width="1" height="55" fill="#638465"/><rect x="709" y="155" width="1" height="55" fill="#638465"/><rect x="650" y="209" width="60" height="1" fill="#638465"/><rect x="650" y="155" width="10" height="1" fill="#638465"/><rect x="696" y="155" width="14" height="1" fill="#638465"/><g fill="#82a29f"><use href="#g82" x="664" y="151"/><use href="#g71" x="671" y="151"/><use href="#g66" x="678" y="151"/><use href="#g65" x="685" y="151"/></g><g fill="#82a29f"><use href="#g82" x="657" y="166"/><use href="#g58" x="664" y="166"/></g><g fill="#82a29f"><use href="#g48" x="682" y="166"/><use href="#g57" x="690" y="166"/><use href="#g53" x="697" y="166"/></g><g fill="#82a29f"><use href="#g71" x="657" y="181"/><use href="#g58" x="664" y="181"/></g><g fill="#82a29f"><use href="#g49" x="682" y="181"/><use href="#g53" x="689" y="181"/><use href="#g52" x="696" y="181"/></g><g fill="#82a29f"><use href="#g66" x="657" y="196"/><use href="#g58" x="664" y="196"/></g><g fill="#82a29f"><use href="#g49" x="682" y="196"/><use href="#g54" x="689" y="196"/><use href="#g56" x="696" y="196"/></g><rect x="650" y="220" width="1" height="55" fill="#638465"/><rect x="709" y="220" width="1" height="55" fill="#638465"/><rect x="650" y="274" width="60" height="1" fill="#638465"/><rect x="650" y="220" width="10" height="1" fill="#638465"/><rect x="689" y="220" width="21" height="1" fill="#638465"/><g fill="#82a29f"><use href="#g72" x="664" y="216"/><use href="#g83" x="671" y="216"/><use href="#g86" x="678" y="216"/></g><g fill="#82a29f"><use href="#g72" x="657" y="231"/><use href="#g58" x="664" y="231"/></g><g fill="#82a29f"><use href="#g49" x="677" y="231"/><use href="#g57" x="684" y="231"/><use href="#g50" x="691" y="231"/></g><g fill="#82a29f"><use href="#g83" x="657" y="246"/><use href="#g58" x="664" y="246"/></g><g fill="#82a29f"><use href="#g52" x="677" y="246"/><use href="#g51" x="684" y="246"/><use href="#g37" x="691" y="246"/></g><g fill="#82a29f"><use href="#g86" x="657" y="261"/><use href="#g58" x="664" y="261"/></g><g fill="#82a29f"><use href="#g54" x="677" y="261"/><use href="#g54" x="684" y="261"/><use href="#g37" x="691" y="261"/></g><rect x="650" y="285" width="60" height="80" fill="#62857f"/><rect x="652" y="287" width="17" height="17" fill="#60827d"/><rect x="671" y="287" width="18" height="17" fill="#2c3334"/><rect x="691" y="287" width="17" height="17" fill="#82a29f"/><rect x="652" y="306" width="17" height="18" fill="#5f9aa8"/><rect x="671" y="306" width="18" height="18" fill="#334e57"/><rect x="691" y="306" width="17" height="18" fill="#6aa9b8"/><rect x="652" y="326" width="17" height="18" fill="#a9cb8d"/><rect x="671" y="326" width="18" height="18" fill="#3b6357"/><rect x="691" y="326" width="17" height="18" fill="#97af81"/><rect x="652" y="346" width="17" height="17" fill="#5b6462"/><rect x="671" y="346" width="18" height="17" fill="#2c3334"/><rect x="691" y="346" width="17" height="17" fill="#666b69"/><rect x="650" y="370" width="60" height="20" fill="#60827d"/><rect x="651" y="371" width="58" height="18" fill="#2b3a3a"/><clipPath id="hexclip"><rect x="651" y="371" width="58" height="18"/></clipPath><g fill="#82a29f" clip-path="url(#hexclip)"><use href="#g53" x="655" y="376"/><use href="#g70" x="662" y="376"/><use href="#g57" x="669" y="376"/><use href="#g65" x="676" y="376"/><use href="#g65" x="683" y="376"/><use href="#g56" x="690" y="376"/><use href="#g70" x="697" y="376"/><use href="#g70" x="704" y="376"/></g><rect x="355" y="402" width="365" height="1" fill="#638465"/><g fill="#666b69"><use href="#g84" x="367" y="424"/><use href="#g101" x="374" y="424"/><use href="#g120" x="381" y="424"/><use href="#g116" x="388" y="424"/><use href="#g65" x="400" y="424"/><use href="#g108" x="407" y="424"/><use href="#g105" x="414" y="424"/><use href="#g103" x="421" y="424"/><use href="#g110" x="428" y="424"/><use href="#g109" x="435" y="424"/><use href="#g101" x="443" y="424"/><use href="#g110" x="450" y="424"/><use href="#g116" x="457" y="424"/><use href="#g58" x="464" y="424"/></g><rect x="450" y="415" width="85" height="25" fill="#5b6462"/><rect x="451" y="416" width="83" height="23" fill="#2c3334"/><rect x="470" y="422" width="12" height="1" fill="#666b69"/><rect x="470" y="433" width="12" height="1" fill="#666b69"/><rect x="470" y="422" width="1" height="12" fill="#666b69"/><rect x="481" y="422" width="1" height="12" fill="#666b69"/><rect x="471" y="426" width="4" height="4" fill="#666b69"/><g fill="#666b69"><use href="#g76" x="488" y="424"/><use href="#g69" x="495" y="424"/><use href="#g70" x="502" y="424"/><use href="#g84" x="509" y="424"/></g><rect x="537" y="415" width="85" height="25" fill="#5b6462"/><rect x="538" y="416" width="83" height="23" fill="#2c3334"/><rect x="550" y="422" width="12" height="1" fill="#666b69"/><rect x="550" y="433" width="12" height="1" fill="#666b69"/><rect x="550" y="422" width="1" height="12" fill="#666b69"/><rect x="561" y="422" width="1" height="12" fill="#666b69"/><rect x="554" y="426" width="4" height="4" fill="#666b69"/><g fill="#666b69"><use href="#g67" x="568" y="424"/><use href="#g69" x="575" y="424"/><use href="#g78" x="582" y="424"/><use href="#g84" x="589" y="424"/><use href="#g69" x="596" y="424"/><use href="#g82" x="603" y="424"/></g><rect x="624" y="415" width="85" height="25" fill="#5b6462"/><rect x="625" y="416" width="83" height="23" fill="#2c3334"/><rect x="641" y="422" width="12" height="1" fill="#666b69"/><rect x="641" y="433" width="12" height="1" fill="#666b69"/><rect x="641" y="422" width="1" height="12" fill="#666b69"/><rect x="652" y="422" width="1" height="12" fill="#666b69"/><rect x="648" y="426" width="4" height="4" fill="#666b69"/><g fill="#666b69"><use href="#g82" x="659" y="424"/><use href="#g73" x="666" y="424"/><use href="#g71" x="673" y="424"/><use href="#g72" x="680" y="424"/><use href="#g84" x="687" y="424"/></g><rect x="355" y="465" width="1" height="100" fill="#638465"/><rect x="719" y="465" width="1" height="100" fill="#638465"/><rect x="355" y="564" width="365" height="1" fill="#638465"/><rect x="355" y="465" width="10" height="1" fill="#638465"/><rect x="455" y="465" width="265" height="1" fill="#638465"/><g fill="#82a29f"><use href="#g70" x="369" y="461"/><use href="#g111" x="376" y="461"/><use href="#g110" x="383" y="461"/><use href="#g116" x="390" y="461"/><use href="#g79" x="402" y="461"/><use href="#g112" x="409" y="461"/><use href="#g116" x="416" y="461"/><use href="#g105" x="423" y="461"/><use href="#g111" x="430" y="461"/><use href="#g110" x="437" y="461"/><use href="#g115" x="444" y="461"/></g><rect x="365" y="480" width="85" height="30" fill="#60827d"/><rect x="367" y="482" width="81" height="26" fill="#2c3334"/><rect x="385" y="489" width="12" height="1" fill="#82a29f"/><rect x="385" y="490" width="1" height="1" fill="#82a29f"/><rect x="396" y="490" width="1" height="1" fill="#82a29f"/><rect x="390" y="490" width="2" height="10" fill="#82a29f"/><rect x="389" y="500" width="4" height="1" fill="#82a29f"/><g fill="#82a29f"><use href="#g76" x="403" y="491"/><use href="#g111" x="410" y="491"/><use href="#g97" x="417" y="491"/><use href="#g100" x="424" y="491"/></g><g fill="#82a29f"><use href="#g83" x="454" y="491"/><use href="#g105" x="461" y="491"/><use href="#g122" x="468" y="491"/><use href="#g101" x="475" y="491"/><use href="#g58" x="482" y="491"/></g><rect x="490" y="480" width="20" height="30" fill="#60827d"/><rect x="491" y="481" width="18" height="28" fill="#2c3334"/><rect x="512" y="480" width="36" height="30" fill="#60827d"/><rect x="513" y="481" width="34" height="28" fill="#2b3a3a"/><rect x="550" y="480" width="20" height="30" fill="#60827d"/><rect x="551" y="481" width="18" height="28" fill="#2c3334"/><rect x="501" y="490" width="1" height="11" fill="#82a29f"/><rect x="500" y="491" width="1" height="9" fill="#82a29f"/><rect x="499" y="492" width="1" height="7" fill="#82a29f"/><rect x="498" y="493" width="1" height="5" fill="#82a29f"/><rect x="497" y="494" width="1" height="3" fill="#82a29f"/><rect x="496" y="495" width="1" height="1" fill="#82a29f"/><rect x="558" y="490" width="1" height="11" fill="#82a29f"/><rect x="559" y="491" width="1" height="9" fill="#82a29f"/><rect x="560" y="492" width="1" height="7" fill="#82a29f"/><rect x="561" y="493" width="1" height="5" fill="#82a29f"/><rect x="562" y="494" width="1" height="3" fill="#82a29f"/><rect x="563" y="495" width="1" height="1" fill="#82a29f"/><g fill="#82a29f"><use href="#g49" x="523" y="491"/><use href="#g50" x="530" y="491"/></g><g fill="#82a29f"><use href="#g83" x="573" y="491"/><use href="#g112" x="580" y="491"/><use href="#g97" x="587" y="491"/><use href="#g99" x="594" y="491"/><use href="#g105" x="601" y="491"/><use href="#g110" x="608" y="491"/><use href="#g103" x="615" y="491"/><use href="#g58" x="622" y="491"/></g><rect x="630" y="480" width="20" height="30" fill="#60827d"/><rect x="631" y="481" width="18" height="28" fill="#2c3334"/><rect x="652" y="480" width="36" height="30" fill="#60827d"/><rect x="653" y="481" width="34" height="28" fill="#2b3a3a"/><rect x="690" y="480" width="20" height="30" fill="#60827d"/><rect x="691" y="481" width="18" height="28" fill="#2c3334"/><rect x="641" y="490" width="1" height="11" fill="#82a29f"/><rect x="640" y="491" width="1" height="9" fill="#82a29f"/><rect x="639" y="492" width="1" height="7" fill="#82a29f"/><rect x="638" y="493" width="1" height="5" fill="#82a29f"/><rect x="637" y="494" width="1" height="3" fill="#82a29f"/><rect x="636" y="495" width="1" height="1" fill="#82a29f"/><rect x="698" y="490" width="1" height="11" fill="#82a29f"/><rect x="699" y="491" width="1" height="9" fill="#82a29f"/><rect x="700" y="492" width="1" height="7" fill="#82a29f"/><rect x="701" y="493" width="1" height="5" fill="#82a29f"/><rect x="702" y="494" width="1" height="3" fill="#82a29f"/><rect x="703" y="495" width="1" height="1" fill="#82a29f"/><g fill="#82a29f"><use href="#g48" x="666" y="491"/></g><rect x="365" y="520" width="345" height="35" fill="#60827d"/><rect x="366" y="521" width="343" height="33" fill="#2b3a3a"/><g fill="#82a29f"><use href="#g115" x="370" y="534"/><use href="#g97" x="377" y="534"/><use href="#g109" x="384" y="534"/><use href="#g112" x="392" y="534"/><use href="#g108" x="399" y="534"/><use href="#g101" x="406" y="534"/><use href="#g116" x="418" y="534"/><use href="#g101" x="425" y="534"/><use href="#g120" x="432" y="534"/><use href="#g116" x="439" y="534"/></g><rect x="355" y="575" width="158" height="30" fill="#60827d"/><rect x="356" y="576" width="156" height="28" fill="#2c3334"/><g fill="#82a29f"><use href="#g84" x="397" y="586"/><use href="#g65" x="404" y="586"/><use href="#g66" x="411" y="586"/><use href="#g76" x="418" y="586"/><use href="#g69" x="425" y="586"/><use href="#g40" x="437" y="586"/><use href="#g46" x="442" y="586"/><use href="#g112" x="445" y="586"/><use href="#g110" x="452" y="586"/><use href="#g103" x="459" y="586"/><use href="#g41" x="466" y="586"/></g><rect x="515" y="575" width="30" height="30" fill="#60827d"/><rect x="516" y="576" width="28" height="28" fill="#2c3334"/><g fill="#82a29f"><use href="#g52" x="519" y="586"/><use href="#g47" x="526" y="586"/><use href="#g52" x="534" y="586"/></g><rect x="550" y="575" width="170" height="30" fill="#60827d"/><rect x="552" y="577" width="166" height="26" fill="#2c3334"/><path fill="#82a29f" d="M586 585h1v1h-1zM586 586h1v1h-1zM586 587h1v1h-1zM586 588h1v1h-1zM586 589h1v1h-1zM586 590h1v1h-1zM586 591h1v1h-1zM586 592h1v1h-1zM586 593h1v1h-1zM586 594h1v1h-1zM586 595h1v1h-1zM586 596h1v1h-1zM588 583h1v1h-1zM589 583h1v1h-1zM590 583h1v1h-1zM591 583h1v1h-1zM592 583h1v1h-1zM593 583h1v1h-1zM594 583h1v1h-1zM595 583h1v1h-1zM596 583h1v1h-1zM597 583h1v1h-1zM588 584h1v1h-1zM587 585h1v1h-1zM588 585h1v1h-1zM597 583h1v1h-1zM597 584h1v1h-1zM597 585h1v1h-1zM597 586h1v1h-1zM597 594h1v1h-1zM597 595h1v1h-1zM597 596h1v1h-1zM586 596h1v1h-1zM587 596h1v1h-1zM588 596h1v1h-1zM589 596h1v1h-1zM590 596h1v1h-1zM591 596h1v1h-1zM592 596h1v1h-1zM593 596h1v1h-1zM594 596h1v1h-1zM595 596h1v1h-1zM596 596h1v1h-1zM597 596h1v1h-1zM591 590h1v1h-1zM591 591h1v1h-1zM591 592h1v1h-1zM591 593h1v1h-1zM591 594h1v1h-1zM591 590h1v1h-1zM592 590h1v1h-1zM593 590h1v1h-1zM594 590h1v1h-1zM591 592h1v1h-1zM592 592h1v1h-1zM593 592h1v1h-1zM591 594h1v1h-1zM592 594h1v1h-1zM593 594h1v1h-1zM594 594h1v1h-1zM596 588h1v1h-1zM597 589h1v1h-1zM598 590h1v1h-1zM597 591h1v1h-1zM596 592h1v1h-1z"/><g fill="#82a29f"><use href="#g69" x="604" y="586"/><use href="#g120" x="611" y="586"/><use href="#g112" x="618" y="586"/><use href="#g111" x="625" y="586"/><use href="#g114" x="632" y="586"/><use href="#g116" x="639" y="586"/><use href="#g83" x="651" y="586"/><use href="#g116" x="658" y="586"/><use href="#g121" x="665" y="586"/><use href="#g108" x="672" y="586"/><use href="#g101" x="679" y="586"/></g><rect x="0" y="635" width="740" height="25" fill="#60827d"/><rect x="1" y="636" width="738" height="23" fill="#2c3334"/><rect x="150" y="635" width="1" height="25" fill="#60827d"/><rect x="335" y="635" width="1" height="25" fill="#60827d"/><g fill="#82a29f"><use href="#g67" x="159" y="644"/><use href="#g72" x="166" y="644"/><use href="#g65" x="173" y="644"/><use href="#g78" x="180" y="644"/><use href="#g71" x="187" y="644"/><use href="#g69" x="194" y="644"/><use href="#g68" x="201" y="644"/><use href="#g80" x="213" y="644"/><use href="#g82" x="220" y="644"/><use href="#g79" x="227" y="644"/><use href="#g80" x="234" y="644"/><use href="#g69" x="241" y="644"/><use href="#g82" x="248" y="644"/><use href="#g84" x="255" y="644"/><use href="#g73" x="262" y="644"/><use href="#g69" x="269" y="644"/><use href="#g83" x="276" y="644"/><use href="#g58" x="283" y="644"/><use href="#g49" x="291" y="644"/><use href="#g54" x="298" y="644"/></g><g fill="#82a29f"><use href="#g70" x="344" y="644"/><use href="#g79" x="351" y="644"/><use href="#g78" x="358" y="644"/><use href="#g84" x="365" y="644"/><use href="#g58" x="372" y="644"/><use href="#g80" x="380" y="644"/><use href="#g105" x="387" y="644"/><use href="#g120" x="394" y="644"/><use href="#g101" x="401" y="644"/><use href="#g108" x="408" y="644"/><use href="#g73" x="420" y="644"/><use href="#g110" x="427" y="644"/><use href="#g116" x="434" y="644"/><use href="#g118" x="441" y="644"/><use href="#g46" x="448" y="644"/><use href="#g111" x="451" y="644"/><use href="#g116" x="458" y="644"/><use href="#g102" x="465" y="644"/><use href="#g40" x="477" y="644"/><use href="#g49" x="482" y="644"/><use href="#g50" x="489" y="644"/><use href="#g56" x="496" y="644"/><use href="#g120" x="508" y="644"/><use href="#g49" x="520" y="644"/><use href="#g50" x="527" y="644"/><use href="#g56" x="534" y="644"/><use href="#g41" x="541" y="644"/><use href="#g45" x="551" y="644"/><use href="#g51" x="562" y="644"/><use href="#g50" x="569" y="644"/><use href="#g55" x="576" y="644"/><use href="#g54" x="583" y="644"/><use href="#g56" x="590" y="644"/><use href="#g98" x="602" y="644"/><use href="#g121" x="609" y="644"/><use href="#g116" x="616" y="644"/><use href="#g101" x="623" y="644"/><use href="#g115" x="630" y="644"/></g></svg></body></html>
